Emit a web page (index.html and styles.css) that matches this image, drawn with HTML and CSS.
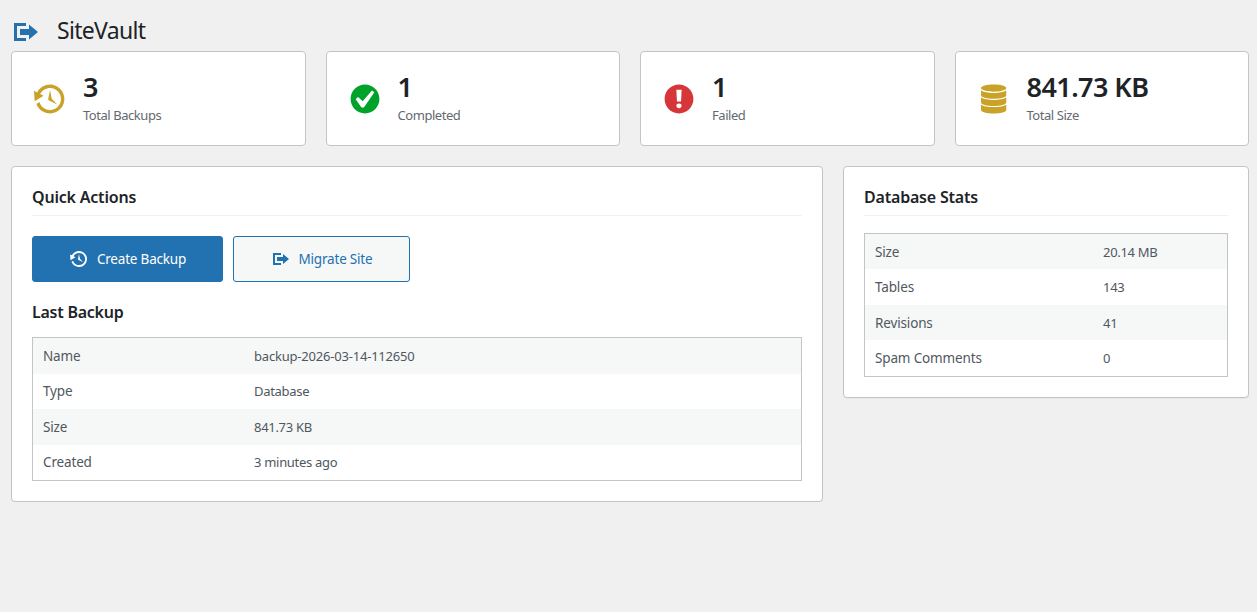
FILE: index.html
```html
<!DOCTYPE html>
<html lang="en">
<head>
    <meta charset="UTF-8">
    <meta name="viewport" content="width=device-width, initial-scale=1.0">
    <title>SiteVault</title>
    <link rel="stylesheet" href="styles.css">
</head>
<body>
    <!-- Icon shapes -->
    <svg class="icon-defs" aria-hidden="true">
        <symbol id="icon-migrate" viewBox="0 0 20 20">
            <path d="M4 6h6V4H2v12.01h8V14H4V6zm2 2h6V5l6 5-6 5v-3H6V8z"/>
        </symbol>
        <symbol id="icon-backup" viewBox="0 0 20 20">
            <path d="M13.65 2.88c3.93 2.01 5.48 6.84 3.47 10.77s-6.83 5.48-10.77 3.47c-1.87-.96-3.2-2.56-3.86-4.4l1.64-1.03c.45 1.57 1.52 2.95 3.08 3.76 3.01 1.54 6.69.35 8.23-2.66 1.55-3.01.36-6.69-2.65-8.24C9.78 3.01 6.1 4.2 4.56 7.21l1.88.97-4.95 3.08-.39-5.82 1.78.91C4.9 2.4 9.75.89 13.65 2.88zm-4.36 7.83C9.11 10.53 9 10.28 9 10c0-.07.03-.12.04-.19h-.01L10 5l.97 4.81L14 13l-4.5-2.12.02-.02c-.08-.04-.16-.09-.23-.15z"/>
        </symbol>
        <symbol id="icon-yes" viewBox="0 0 20 20">
            <path d="M10 2c-4.42 0-8 3.58-8 8s3.58 8 8 8 8-3.58 8-8-3.58-8-8-8zm-.615 12.66h-1.34l-3.24-4.54 1.341-1.25 2.569 2.4 5.141-5.931 1.34.94-5.811 8.381z"/>
        </symbol>
        <symbol id="icon-warning" viewBox="0 0 20 20">
            <path d="M10 2c4.42 0 8 3.58 8 8s-3.58 8-8 8-8-3.58-8-8 3.58-8 8-8zm1.13 9.38l.35-6.46H8.52l.35 6.46h2.26zm-.09 3.36c.24-.23.37-.55.37-.96 0-.42-.12-.74-.36-.97s-.59-.35-1.06-.35-.82.12-1.07.35-.37.55-.37.97c0 .41.13.73.38.96.26.23.61.34 1.06.34s.8-.11 1.05-.34z"/>
        </symbol>
        <symbol id="icon-database" viewBox="0 0 20 20">
            <path d="M9.8 1.900c3.870 0 7 .85 7 2s-3.130 2.050-7 2.050-7-.9-7-2.050 3.130-2 7-2z"/>
            <path d="M2.800 5.100c1.300 1.050 4 1.500 7 1.500s5.700-.45 7-1.500v2.800c0 1.150-3.130 2-7 2s-7-.85-7-2z"/>
            <path d="M2.800 9c1.300 1.050 4 1.500 7 1.500s5.700-.45 7-1.500v2.900c0 1.150-3.130 2-7 2s-7-.85-7-2z"/>
            <path d="M2.800 13c1.300 1.050 4 1.500 7 1.500s5.700-.45 7-1.500v3.100c0 1.150-3.130 2-7 2s-7-.85-7-2z"/>
        </symbol>
    </svg>

    <div class="wrap">
        <h1 class="page-title">
            <svg class="title-icon"><use href="#icon-migrate"/></svg>
            SiteVault
        </h1>

        <!-- Stat cards -->
        <div class="stats-grid">
            <div class="stat-card">
                <svg class="stat-icon"><use href="#icon-backup"/></svg>
                <div class="stat-content">
                    <h3>3</h3>
                    <p>Total Backups</p>
                </div>
            </div>
            <div class="stat-card">
                <svg class="stat-icon success"><use href="#icon-yes"/></svg>
                <div class="stat-content">
                    <h3>1</h3>
                    <p>Completed</p>
                </div>
            </div>
            <div class="stat-card">
                <svg class="stat-icon error"><use href="#icon-warning"/></svg>
                <div class="stat-content">
                    <h3>1</h3>
                    <p>Failed</p>
                </div>
            </div>
            <div class="stat-card">
                <svg class="stat-icon"><use href="#icon-database"/></svg>
                <div class="stat-content">
                    <h3>841.73 KB</h3>
                    <p>Total Size</p>
                </div>
            </div>
        </div>

        <div class="dashboard-grid">
            <!-- Quick actions -->
            <div class="panel">
                <h2>Quick Actions</h2>
                <div class="actions">
                    <a href="#" class="btn btn-primary">
                        <svg class="btn-icon"><use href="#icon-backup"/></svg>
                        Create Backup
                    </a>
                    <a href="#" class="btn btn-secondary">
                        <svg class="btn-icon"><use href="#icon-migrate"/></svg>
                        Migrate Site
                    </a>
                </div>

                <h3 class="sub-title">Last Backup</h3>
                <table class="info-table backup-table">
                    <tbody>
                        <tr><td>Name</td><td>backup-2026-03-14-112650</td></tr>
                        <tr><td>Type</td><td>Database</td></tr>
                        <tr><td>Size</td><td>841.73 KB</td></tr>
                        <tr><td>Created</td><td>3 minutes ago</td></tr>
                    </tbody>
                </table>
            </div>

            <!-- Database stats -->
            <div class="panel">
                <h2>Database Stats</h2>
                <table class="info-table db-table">
                    <tbody>
                        <tr><td>Size</td><td>20.14 MB</td></tr>
                        <tr><td>Tables</td><td>143</td></tr>
                        <tr><td>Revisions</td><td>41</td></tr>
                        <tr><td>Spam Comments</td><td>0</td></tr>
                    </tbody>
                </table>
            </div>
        </div>
    </div>
</body>
</html>
```
FILE: styles.css
```css
* {
    margin: 0;
    padding: 0;
    box-sizing: border-box;
}

body {
    font-family: "Segoe UI", "Noto Sans", "Open Sans", sans-serif;
    font-size: 13px;
    line-height: 1.4;
    background: #f0f0f0;
    color: #3c434a;
}

svg {
    fill: currentColor;
    flex-shrink: 0;
}

.icon-defs {
    display: none;
}

.wrap {
    padding: 10px 8px 0 11px;
}

.page-title {
    display: flex;
    align-items: center;
    gap: 16px;
    height: 41px;
    font-size: 23px;
    font-weight: 400;
    letter-spacing: -0.7px;
    color: #1d2327;
}

.title-icon {
    width: 30px;
    height: 30px;
    margin-top: 2px;
    color: #2271b1;
}

.stats-grid {
    display: grid;
    grid-template-columns: repeat(4, 1fr);
    gap: 20px;
    margin-bottom: 20px;
}

.stat-card {
    display: flex;
    align-items: center;
    gap: 15px;
    height: 95px;
    padding: 20px;
    background: #fff;
    border: 1px solid #c3c4c7;
    border-radius: 4px;
}

.stat-icon {
    width: 36px;
    height: 36px;
    color: #c9a227;
}

.stat-icon.success {
    color: #00a32a;
}

.stat-icon.error {
    color: #d63638;
}

.stat-content h3 {
    padding-top: 1px;
    font-size: 27px;
    font-weight: 600;
    line-height: 28px;
    letter-spacing: -0.55px;
    color: #1d2327;
}

.stat-content p {
    margin-top: 4px;
    line-height: 20px;
    letter-spacing: -0.45px;
    color: #646970;
}

.dashboard-grid {
    display: grid;
    grid-template-columns: 2fr 1fr;
    gap: 20px;
    align-items: start;
}

.panel {
    padding: 20px;
    background: #fff;
    border: 1px solid #c3c4c7;
    border-radius: 4px;
    box-shadow: 0 1px 1px rgba(0, 0, 0, 0.04);
}

.panel h2 {
    height: 29px;
    line-height: 20px;
    border-bottom: 1px solid #f0f0f1;
    font-size: 16px;
    font-weight: 600;
    letter-spacing: -0.2px;
    color: #1d2327;
}

.actions {
    display: flex;
    gap: 10px;
    margin-top: 20px;
}

.btn {
    display: flex;
    align-items: center;
    justify-content: center;
    gap: 8px;
    height: 46px;
    border: 1px solid #2271b1;
    border-radius: 3px;
    font-size: 13.5px;
    letter-spacing: -0.2px;
    text-decoration: none;
}

.btn-icon {
    width: 20px;
    height: 20px;
}

.btn-primary {
    width: 191px;
    background: #2271b1;
    color: #fff;
}

.btn-secondary {
    width: 177px;
    background: #f6f7f7;
    color: #2271b1;
}

.sub-title {
    margin: 20px 0 15px;
    line-height: 20px;
    font-size: 16px;
    font-weight: 600;
    letter-spacing: -0.25px;
    color: #1d2327;
}

.info-table {
    width: 100%;
    height: 144px;
    border: 1px solid #c3c4c7;
    border-spacing: 0;
    table-layout: fixed;
    color: #50575e;
}

.info-table tr:nth-child(odd) {
    background: #f6f7f7;
}

.info-table td {
    padding: 0 10px;
    line-height: 20px;
    vertical-align: middle;
    letter-spacing: -0.3px;
}

.info-table td:first-child {
    font-size: 13.5px;
    letter-spacing: -0.15px;
}

.backup-table td:first-child {
    width: 211px;
}

.backup-table tr:first-child td:last-child {
    letter-spacing: -0.2px;
}

.db-table {
    margin-top: 17px;
}

.db-table tr:nth-child(odd) {
    height: 35px;
}

.db-table tr:nth-child(even) {
    height: 36px;
}

.db-table td:first-child {
    width: 228px;
}
```
